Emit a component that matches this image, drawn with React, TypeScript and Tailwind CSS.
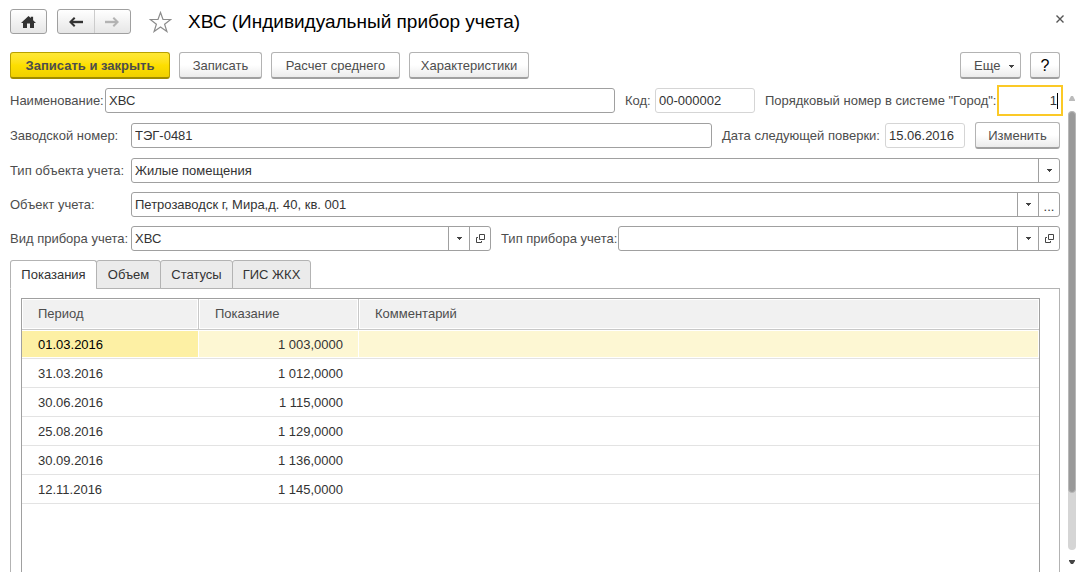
import React, {useState} from 'react'

import clsx from 'clsx'

const READINGS = [
    {period: '01.03.2016', value: '1 003,0000', comment: ''},
    {period: '31.03.2016', value: '1 012,0000', comment: ''},
    {period: '30.06.2016', value: '1 115,0000', comment: ''},
    {period: '25.08.2016', value: '1 129,0000', comment: ''},
    {period: '30.09.2016', value: '1 136,0000', comment: ''},
    {period: '12.11.2016', value: '1 145,0000', comment: ''},
]

const TABS = [
    {title: 'Показания', width: 'w-[87px]'},
    {title: 'Объем', width: 'w-[65px]'},
    {title: 'Статусы', width: 'w-[73px]'},
    {title: 'ГИС ЖКХ', width: 'w-[79px]'},
]

const FIELD = 'h-[25px] min-w-0 rounded-[3px] border border-[#a0a0a0] bg-white text-[#333]'
const BUTTON =
    'h-[27px] shrink-0 rounded-[3px] border border-[#b3b3b3] border-b-2 border-b-[#a0a0a0] bg-linear-to-b from-white from-50% to-[#ebebeb] pt-0.5 text-center whitespace-nowrap'

const Caret: React.FC = () => (
    <svg width="5" height="3" viewBox="0 0 5 3" fill="#444" shapeRendering="crispEdges" aria-hidden="true">
        <path d="M0 0h5v1H4v1H3v1H2V2H1V1H0z" />
    </svg>
)

const OpenIcon: React.FC = () => (
    <svg width="9" height="9" viewBox="0 0 9 9" fill="none" stroke="#444" aria-hidden="true">
        <path d="M3.5 0.5h5v5h-5z" />
        <path d="M2 3.5H0.5v5h5V7" />
    </svg>
)

interface LabelProps {
    htmlFor: string
    className?: string
    children: React.ReactNode
}

const Label: React.FC<LabelProps> = ({htmlFor, className, children}) => (
    <label htmlFor={htmlFor} className={clsx('shrink-0 whitespace-nowrap', className)}>
        {children}
    </label>
)

interface ComboProps {
    id: string
    value: string
    className?: string
    action?: React.ReactNode
    actionLabel?: string
}

/** Поле выбора со стрелкой и необязательной кнопкой справа */
const Combo: React.FC<ComboProps> = ({id, value, className, action, actionLabel}) => (
    <div className={clsx(FIELD, 'flex', className)}>
        <div className="grid min-w-0 flex-1">
            <select
                id={id}
                defaultValue={value}
                className="col-start-1 row-start-1 w-full min-w-0 appearance-none bg-transparent pr-6 pl-[3px] outline-none"
            >
                <option value={value}>{value}</option>
            </select>
            <span className="pointer-events-none col-start-1 row-start-1 flex w-[21px] items-center justify-center justify-self-end border-l border-[#a0a0a0]">
                <Caret />
            </span>
        </div>
        {action && (
            <button
                type="button"
                aria-label={actionLabel}
                className="flex w-[21px] items-center justify-center border-l border-[#a0a0a0]"
            >
                {action}
            </button>
        )}
    </div>
)

const Header: React.FC = () => (
    <header className="flex h-[25px] items-center">
        <button
            type="button"
            aria-label="Домой"
            className="flex h-[25px] w-[37px] items-center justify-center rounded-[3px] border border-[#a0a0a0] bg-linear-to-b from-white to-[#e6e6e6]"
        >
            <svg width="15" height="12" viewBox="0 0 15 12" fill="#333">
                <path d="M7.5 0L9.8 2.1V0.7h2.3v3.6L15 7h-2v5H9V7.5H6V12H2V7H0z" />
            </svg>
        </button>
        <div className="ml-[10px] flex h-[25px] w-[74px] rounded-[3px] border border-[#a0a0a0] bg-linear-to-b from-white to-[#e6e6e6]">
            <button type="button" aria-label="Назад" className="flex flex-1 items-center justify-center">
                <svg width="14" height="10" viewBox="0 0 14 10" fill="none" stroke="#333" strokeWidth="2">
                    <path d="M14 5H2" strokeWidth="2.4" />
                    <path d="M5.7 0.7L1.4 5l4.3 4.3" />
                </svg>
            </button>
            <button
                type="button"
                aria-label="Вперед"
                className="flex flex-1 items-center justify-center border-l border-[#ccc]"
            >
                <svg width="14" height="10" viewBox="0 0 14 10" fill="none" stroke="#b3b3b3" strokeWidth="2">
                    <path d="M0 5h12" strokeWidth="2.4" />
                    <path d="M8.3 0.7L12.6 5 8.3 9.3" />
                </svg>
            </button>
        </div>
        <button type="button" aria-label="Избранное" className="ml-[18px]">
            <svg width="23" height="22" viewBox="0 0 23 22" fill="none" stroke="#8c8c8c" strokeWidth="1.2">
                <path d="M11.5 1.5l2.5 7h7.7l-6.1 4.7 2.3 7.3-6.4-4.5-6.4 4.5 2.3-7.3L1.3 8.5H9z" />
            </svg>
        </button>
        <h1 className="ml-4 flex-1 text-[19px] leading-6 whitespace-nowrap text-black">
            ХВС (Индивидуальный прибор учета)
        </h1>
        <button type="button" aria-label="Закрыть" className="-mr-1 self-start pt-1.5">
            <svg width="8" height="8" viewBox="0 0 8 8" fill="none" stroke="#555" strokeWidth="1.4">
                <path d="M0.5 0.5l7 7M7.5 0.5l-7 7" />
            </svg>
        </button>
    </header>
)

const CommandBar: React.FC = () => (
    <div className="mt-[18px] flex gap-[9px]">
        <button
            type="button"
            className="h-[27px] w-[160px] rounded-[3px] border border-b-2 border-[#b8a000] border-b-[#a08c00] bg-linear-to-b from-[#ffe835] via-[#fddf00] to-[#f0d000] pt-0.5 font-bold whitespace-nowrap"
        >
            Записать и закрыть
        </button>
        <button type="button" className={clsx(BUTTON, 'w-[83px]')}>
            Записать
        </button>
        <button type="button" className={clsx(BUTTON, 'w-[129px]')}>
            Расчет среднего
        </button>
        <button type="button" className={clsx(BUTTON, 'w-[120px]')}>
            Характеристики
        </button>
        <button
            type="button"
            className={clsx(BUTTON, 'ml-auto flex w-[61px] items-center justify-between pr-[6px] pl-[13px]')}
        >
            Еще
            <Caret />
        </button>
        <button type="button" className={clsx(BUTTON, 'w-[30px] text-base leading-5 text-black')}>
            ?
        </button>
    </div>
)

const ReadingsTable: React.FC = () => {
    const [selected, setSelected] = useState(0)

    return (
        <div className="flex-1 border border-b-0 border-[#a0a0a0]">
            <table className="w-full table-fixed border-separate border-spacing-0">
                <colgroup>
                    <col className="w-[177px]" />
                    <col className="w-[160px]" />
                    <col />
                </colgroup>
                <thead>
                    <tr className="h-[31px] text-left">
                        {['Период', 'Показание', 'Комментарий'].map((title) => (
                            <th
                                key={title}
                                className="border-r border-b border-[#c8c8c8] bg-[#f1f1f1] px-4 font-normal shadow-[inset_0_0_0_1px_white] last:border-r-0"
                            >
                                {title}
                            </th>
                        ))}
                    </tr>
                </thead>
                <tbody className="text-[#333]">
                    {READINGS.map((row, index) => {
                        const active = index === selected
                        const cell = clsx(
                            'border-b border-[#e3e3e3] px-4 pt-0.5',
                            active && 'bg-[#fdf7d3] shadow-[inset_0_1px_white,inset_-1px_-1px_white]',
                        )
                        return (
                            <tr key={row.period} className="h-[29px]" onClick={() => setSelected(index)}>
                                <td
                                    className={clsx(
                                        'border-b border-[#e3e3e3] px-4 pt-0.5',
                                        active &&
                                            'bg-[#fdf0a4] text-black shadow-[inset_0_1px_white,inset_-1px_-1px_white]',
                                    )}
                                >
                                    {row.period}
                                </td>
                                <td className={clsx(cell, 'text-right')}>{row.value}</td>
                                <td className={cell}>{row.comment}</td>
                            </tr>
                        )
                    })}
                </tbody>
            </table>
        </div>
    )
}

const ScrollBar: React.FC = () => (
    <div className="mt-2 ml-2 flex w-2 shrink-0 flex-col items-center pb-2">
        <svg width="6" height="5" viewBox="0 0 6 5" fill="#bbb" className="mb-[10px] shrink-0">
            <path d="M2 0h2l2 4v1H0V4z" />
        </svg>
        <div className="w-2 flex-1 rounded-full bg-[#d5d5d5]">
            <div className="h-[87%] w-2 rounded-full border border-[#b8b8b8] bg-[#999]" />
        </div>
        <svg width="6" height="4" viewBox="0 0 6 4" fill="#444" className="mt-[10px] shrink-0">
            <path d="M0 0h6v1L4 4H2L0 1z" />
        </svg>
    </div>
)

const App: React.FC = () => {
    const [tab, setTab] = useState(TABS[0].title)

    return (
        <div className="flex min-h-screen flex-col bg-white pt-[9px] pb-[11px] pl-[10px] font-['Liberation_Sans',Arial,sans-serif] text-[13px] leading-4 text-[#4d4d4d]">
            <div className="pr-4">
                <Header />
                <CommandBar />
            </div>

            <div className="mt-[9px] flex flex-1">
                <form className="flex min-w-0 flex-1 flex-col gap-[9px]" onSubmit={(e) => e.preventDefault()}>
                    <div className="flex items-center">
                        <Label htmlFor="name" className="w-[95px]">
                            Наименование:
                        </Label>
                        <input id="name" defaultValue="ХВС" className={clsx(FIELD, 'flex-1 px-[3px]')} />
                        <Label htmlFor="code" className="ml-[10px] w-[30px]">
                            Код:
                        </Label>
                        <input
                            id="code"
                            readOnly
                            value="00-000002"
                            className="h-[25px] w-[100px] rounded-[3px] border border-[#d5d5d5] px-[3px] text-[#333]"
                        />
                        <Label htmlFor="order" className="ml-[10px] w-[235px]">
                            Порядковый номер в системе "Город":
                        </Label>
                        <div className="flex h-[25px] w-[60px] items-center bg-white pr-[2px] outline-2 outline-offset-1 outline-[#fbc926]">
                            <input
                                id="order"
                                defaultValue="1"
                                className="w-full min-w-0 flex-1 text-right text-[#333] caret-transparent outline-none"
                            />
                            <span className="h-4 w-px bg-black" />
                        </div>
                    </div>

                    <div className="flex items-center">
                        <Label htmlFor="serial" className="w-[121px]">
                            Заводской номер:
                        </Label>
                        <input id="serial" defaultValue="ТЭГ-0481" className={clsx(FIELD, 'flex-1 px-[3px]')} />
                        <Label htmlFor="check" className="ml-[10px] w-[163px]">
                            Дата следующей поверки:
                        </Label>
                        <input
                            id="check"
                            readOnly
                            value="15.06.2016"
                            className="h-[25px] w-[80px] rounded-[3px] border border-[#d5d5d5] px-[3px] text-[#333]"
                        />
                        <button type="button" className={clsx(BUTTON, 'ml-[10px] w-[85px]')}>
                            Изменить
                        </button>
                    </div>

                    <div className="flex items-center">
                        <Label htmlFor="objectType" className="w-[121px]">
                            Тип объекта учета:
                        </Label>
                        <Combo id="objectType" value="Жилые помещения" className="flex-1" />
                    </div>

                    <div className="flex items-center">
                        <Label htmlFor="object" className="w-[121px]">
                            Объект учета:
                        </Label>
                        <Combo
                            id="object"
                            value="Петрозаводск г, Мира,д. 40, кв. 001"
                            className="flex-1"
                            action={<span className="pt-1">...</span>}
                            actionLabel="Выбрать"
                        />
                    </div>

                    <div className="flex items-center">
                        <Label htmlFor="deviceKind" className="w-[121px]">
                            Вид прибора учета:
                        </Label>
                        <Combo
                            id="deviceKind"
                            value="ХВС"
                            className="w-[360px]"
                            action={<OpenIcon />}
                            actionLabel="Открыть вид"
                        />
                        <Label htmlFor="deviceType" className="ml-[10px] w-[117px]">
                            Тип прибора учета:
                        </Label>
                        <Combo
                            id="deviceType"
                            value=""
                            className="flex-1"
                            action={<OpenIcon />}
                            actionLabel="Открыть тип"
                        />
                    </div>

                    <div className="flex flex-1 flex-col">
                        <div role="tablist" className="z-10 -mb-px flex">
                            {TABS.map(({title, width}) => (
                                <button
                                    key={title}
                                    type="button"
                                    role="tab"
                                    aria-selected={title === tab}
                                    onClick={() => setTab(title)}
                                    className={clsx(
                                        '-mr-px h-[29px] rounded-t-[3px] border border-[#b3b3b3] text-center whitespace-nowrap text-[#333]',
                                        width,
                                        title === tab ? 'border-b-white bg-white' : 'bg-[#ebebeb]',
                                    )}
                                >
                                    {title}
                                </button>
                            ))}
                        </div>
                        <div
                            role="tabpanel"
                            className="flex flex-1 flex-col border border-b-0 border-[#b3b3b3] pt-[9px] pr-[19px] pl-[10px]"
                        >
                            <ReadingsTable />
                        </div>
                    </div>
                </form>
                <ScrollBar />
            </div>
        </div>
    )
}

export default App
